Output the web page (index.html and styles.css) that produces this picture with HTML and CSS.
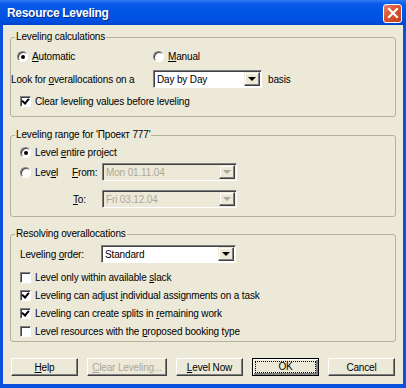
FILE: index.html
```html
<!DOCTYPE html>
<html lang="en">
<head>
    <meta charset="UTF-8">
    <title>Resource Leveling</title>
    <link rel="stylesheet" href="styles.css">
</head>
<body>
    <div class="window">
        <div class="titlebar">
            <span class="title">Resource Leveling</span>
            <span class="close">
                <svg width="12" height="12" viewBox="0 0 12 12">
                    <path d="M2 2 L10 10 M10 2 L2 10" stroke="#fff" stroke-width="2.2" stroke-linecap="square"/>
                </svg>
            </span>
        </div>
        <div class="client">
            <fieldset class="group g1">
                <legend>Leveling calculations</legend>
                <div class="body">
                    <div class="row">
                        <label class="opt auto"><span class="radio on"></span><span><u>A</u>utomatic</span></label>
                        <label class="opt"><span class="radio"></span><span><u>M</u>anual</span></label>
                    </div>
                    <div class="row r2">
                        <span class="look">Look for <u>o</u>verallocations on a</span>
                        <div class="combo w-day"><span class="val">Day by Day</span><span class="drop"><i></i></span></div>
                        <span class="basis">basis</span>
                    </div>
                    <div class="row r3">
                        <label class="opt ck"><span class="check on"></span><span>Clear levelin<u>g</u> values before leveling</span></label>
                    </div>
                </div>
            </fieldset>

            <fieldset class="group g2">
                <legend>Leveling range for 'Проект 777'</legend>
                <div class="body">
                    <div class="row">
                        <label class="opt rd"><span class="radio on"></span><span>Level <u>e</u>ntire project</span></label>
                    </div>
                    <div class="row r2">
                        <label class="opt rd lvl"><span class="radio"></span><span>Lev<u>e</u>l</span></label>
                        <span class="from"><u>F</u>rom:</span>
                        <div class="combo off w-date"><span class="val">Mon 01.11.04</span><span class="drop"><i></i></span></div>
                    </div>
                    <div class="row r3">
                        <span class="to"><u>T</u>o:</span>
                        <div class="combo off w-date"><span class="val">Fri 03.12.04</span><span class="drop"><i></i></span></div>
                    </div>
                </div>
            </fieldset>

            <fieldset class="group g3">
                <legend>Resolving overallocations</legend>
                <div class="body">
                    <div class="row">
                        <span class="order">Leveling <u>o</u>rder:</span>
                        <div class="combo w-date"><span class="val">Standard</span><span class="drop"><i></i></span></div>
                    </div>
                    <div class="row cr first">
                        <label class="opt ck"><span class="check"></span><span>Level only within available <u>s</u>lack</span></label>
                    </div>
                    <div class="row cr">
                        <label class="opt ck"><span class="check on"></span><span>Leveling can adjust <u>i</u>ndividual assignments on a task</span></label>
                    </div>
                    <div class="row cr">
                        <label class="opt ck"><span class="check on"></span><span>Leveling can create splits in <u>r</u>emaining work</span></label>
                    </div>
                    <div class="row cr">
                        <label class="opt ck"><span class="check"></span><span>Level resources with the <u>p</u>roposed booking type</span></label>
                    </div>
                </div>
            </fieldset>

            <div class="buttons">
                <button class="btn w-help"><u>H</u>elp</button>
                <button class="btn w-clear" disabled><u>C</u>lear Leveling...</button>
                <button class="btn w-help"><u>L</u>evel Now</button>
                <button class="btn w-help default"><span class="focus">OK</span></button>
                <button class="btn w-help">Cancel</button>
            </div>
        </div>
    </div>
</body>
</html>
```

FILE: styles.css
```css
body {
    margin: 0;
    font-family: 'Liberation Sans', Arial, sans-serif;
    font-size: 10px;
    letter-spacing: -0.15px;
    color: #000;
}
u {
    text-decoration: underline;
}
.window {
    width: 406px;
    height: 388px;
    background: #0a50dc;
    display: flex;
    flex-direction: column;
}
.titlebar {
    height: 25px;
    display: flex;
    align-items: center;
    justify-content: space-between;
    padding: 0 4px 0 7px;
    box-sizing: border-box;
    background: linear-gradient(#2f7cf5, #0a5ae8 15%, #0055e5 50%, #004fe0 85%, #0044cc);
}
.title {
    color: #fff;
    font-weight: bold;
    font-size: 12px;
    letter-spacing: -0.3px;
    text-shadow: 1px 1px 0 #0a2a80;
    margin-top: 1px;
}
.close {
    width: 17px;
    height: 17px;
    border: 1px solid #fff;
    border-radius: 3px;
    background: linear-gradient(135deg, #e8806a, #d9532f 45%, #c2401e);
    display: flex;
    align-items: center;
    justify-content: center;
    margin-top: 1px;
}
.client {
    flex: 1;
    margin: 0 3px 4px 3px;
    background: #ece9d8;
    padding: 6px 7px 0 7px;
}
.group {
    margin: 0;
    padding: 0;
    border: 1px solid #b4b19f;
    border-radius: 3px;
    min-width: 0;
}
.group legend {
    margin-left: 4px;
    padding: 0 1px;
    line-height: 12px;
    height: 12px;
}
.body {
    padding: 4px 6px 6px 6px;
}
.row {
    display: flex;
    align-items: center;
    height: 18px;
    white-space: nowrap;
}
.g1 .r2 {
    margin-top: 5px;
}
.g1 .r3 {
    margin-top: 4px;
}
.g2 {
    margin-top: 12px;
}
.g2 .body {
    padding: 2px 6px 8px 6px;
}
.g2 .r2 {
    margin-top: 2px;
}
.g2 .r3 {
    margin-top: 9px;
}
.g3 {
    margin-top: 11px;
}
.g3 .body {
    padding: 5px 6px 1px 6px;
}
.g3 .cr.first {
    margin-top: 5px;
}
.opt {
    display: flex;
    align-items: center;
    gap: 4px;
}
.auto {
    width: 136px;
}
.rd {
    margin-left: 3px;
}
.lvl {
    width: 52px;
}
.ck {
    margin-left: 3px;
}
.radio {
    width: 11px;
    height: 11px;
    border-radius: 50%;
    box-sizing: border-box;
    border: 1px solid;
    border-color: #808080 #fff #fff #808080;
    background: #fff;
    box-shadow: inset 1px 1px 0 #404040;
    position: relative;
}
.radio.on::after {
    content: '';
    position: absolute;
    left: 3px;
    top: 3px;
    width: 4px;
    height: 4px;
    border-radius: 50%;
    background: #000;
}
.check {
    width: 11px;
    height: 11px;
    box-sizing: border-box;
    border: 1px solid;
    border-color: #808080 #fff #fff #808080;
    box-shadow: inset 1px 1px 0 #404040;
    background: #fff;
    position: relative;
}
.check.on::after {
    content: '';
    position: absolute;
    left: 2px;
    top: 0px;
    width: 3px;
    height: 5px;
    border: solid #000;
    border-width: 0 2px 2px 0;
    transform: rotate(40deg);
}
.look {
    margin-left: -6px;
    width: 142px;
}
.basis {
    margin-left: 6px;
}
.combo {
    height: 18px;
    box-sizing: border-box;
    border: 1px solid;
    border-color: #808080 #fff #fff #808080;
    box-shadow: inset 1px 1px 0 #404040;
    background: #fff;
    display: flex;
    align-items: center;
    padding: 1px 1px 1px 3px;
}
.combo .val {
    flex: 1;
}
.combo.off {
    background: #ece9d8;
    color: #aca899;
}
.w-day {
    width: 109px;
}
.w-date {
    width: 135px;
}
.drop {
    width: 16px;
    height: 14px;
    box-sizing: border-box;
    background: #ece9d8;
    border: 1px solid;
    border-color: #ece9d8 #404040 #404040 #ece9d8;
    box-shadow: inset -1px -1px 0 #808080, inset 1px 1px 0 #fff;
    display: flex;
    align-items: center;
    justify-content: center;
}
.drop i {
    width: 0;
    height: 0;
    border-left: 4px solid transparent;
    border-right: 4px solid transparent;
    border-top: 4px solid #000;
}
.off .drop i {
    border-top-color: #aca899;
}
.from {
    width: 30px;
}
.to {
    margin-left: 56px;
    width: 29px;
}
.order {
    margin-left: 3px;
    width: 81px;
}
.buttons {
    display: flex;
    gap: 9px;
    margin: 16px 0 0 1px;
}
.btn {
    height: 18px;
    box-sizing: border-box;
    padding: 0;
    font-family: inherit;
    font-size: 10px;
    letter-spacing: inherit;
    color: #000;
    background: #ece9d8;
    border: 1px solid;
    border-color: #fff #404040 #404040 #fff;
    box-shadow: inset -1px -1px 0 #808080;
}
.btn:disabled {
    color: #aca899;
}
.w-help {
    width: 67px;
}
.w-clear {
    width: 80px;
}
.default {
    border: 1px solid #000;
    box-shadow: inset 1px 1px 0 #fff, inset -2px -2px 0 #808080;
    padding: 2px;
}
.focus {
    display: block;
    height: 100%;
    box-sizing: border-box;
    border: 1px dotted #000;
    line-height: 10px;
}
```
